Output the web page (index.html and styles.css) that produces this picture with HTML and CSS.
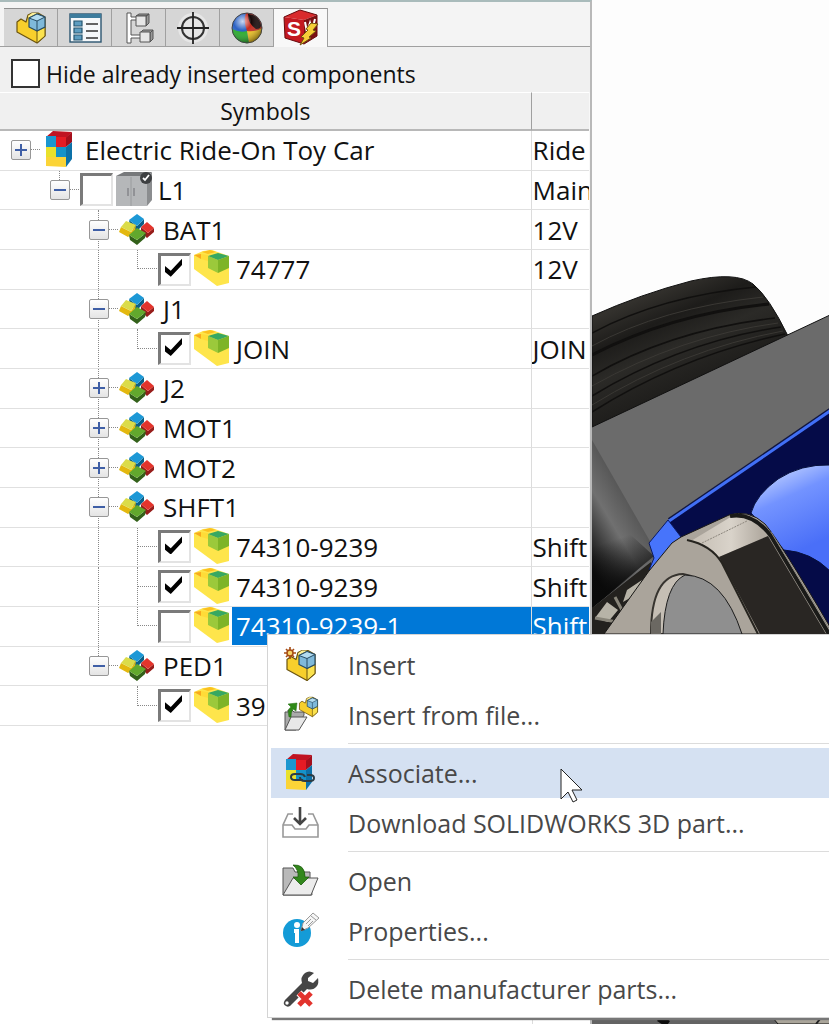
FILE: index.html
```html
<!DOCTYPE html>
<html lang="en">
<head>
<meta charset="UTF-8">
<meta name="viewport" content="width=device-width, initial-scale=1.0">
<title>Electric Ride-On Toy Car</title>
<link rel="stylesheet" href="styles.css">
</head>
<body>

<!-- shared icons -->
<svg class="sprite" width="0" height="0" aria-hidden="true">
    <symbol id="part" viewBox="0 0 32 34">
        <path d="M2 11 6 8 11 11 13 4 17 2 23 2 30 6V25L22 32 2 21Z" fill="#f7cf2c" stroke="#6b5410" stroke-width="1.2" stroke-linejoin="round"/>
        <path d="M22 20 30 16V25L22 32Z" fill="#fbe24e" stroke="#6b5410" stroke-linejoin="round"/>
        <path d="M13 5 17 2 22 2 14 7Z" fill="#fbef9a"/>
        <path d="M14 7 22 3 30 6V16L22 20 14 16Z" fill="#7fb9da" stroke="#274b63" stroke-width="1.2" stroke-linejoin="round"/>
        <path d="M14 7 22 3 30 6 22 10Z" fill="#b3dcf0" stroke="#274b63" stroke-linejoin="round"/>
        <path d="M22 10V20" stroke="#274b63"/>
    </symbol>
    <symbol id="cubes" viewBox="0 0 40 40">
        <path d="M11 10 19 16 26 9V14L19 21 12 16Z" fill="#0b5f86"/>
        <path d="M19 4 26 9 19 16 11 10Z" fill="#1c98d6"/>
        <path d="M3 17 13 22 18 15 17 21 10 27 1 22Z" fill="#e3b80f"/>
        <path d="M8 11 18 15 13 22 3 17Z" fill="#dbdc49"/>
        <path d="M23 17 30 23 36 18V22L29 28 23 22Z" fill="#971d1b"/>
        <path d="M29 12 36 18 30 23 23 17Z" fill="#e3342c"/>
        <path d="M11 25 19 30 28 23 27 28 19 35 12 30Z" fill="#33611a"/>
        <path d="M19 18 28 23 19 30 11 25Z" fill="#62a82d"/>
    </symbol>
    <symbol id="brick" viewBox="0 0 40 40">
        <path d="M3 6 12 2 21 1 38 7V34L26 37 3 20Z" fill="#fee54b"/>
        <path d="M3 6 10 5 10 10Z" fill="#f8a91c"/>
        <path d="M11 3 19 1 25 3 17 5Z" fill="#fbc01f"/>
        <path d="M10 5 17 6V12L10 10Z" fill="#ffdc38"/>
        <path d="M17 7 27 11V24L17 19Z" fill="#9bc93b"/>
        <path d="M27 11 38 7V19L27 24Z" fill="#7eb427"/>
        <path d="M17 7 27 4 38 7 27 11Z" fill="#37a861"/>
    </symbol>
    <symbol id="project" viewBox="0 0 40 40">
        <path d="M6 7 13 1 32 2 26 9Z" fill="#c01322"/>
        <path d="M6 6H16V17H6Z" fill="#1b96cf"/>
        <path d="M16 7H26V17H16Z" fill="#e51b24"/>
        <path d="M6 17H16V27H26V37L6 36Z" fill="#fbd437"/>
        <path d="M6 17H16V27H6Z" fill="#e9e12b"/>
        <path d="M16 17H26V27H16Z" fill="#1593c9"/>
        <path d="M26 8 32 2V12L26 17Z" fill="#a40f1c"/>
        <path d="M26 17 32 12V29L26 37Z" fill="#0d71a8"/>
    </symbol>
</svg>

<div class="app">
    <div class="panel">
        <div class="tabs">
            <button class="tab" aria-label="Feature tree">
                <svg width="32" height="34"><use href="#part"/></svg>
            </button>
            <button class="tab" aria-label="Properties">
                <svg width="34" height="32" viewBox="0 0 34 32">
                    <rect x="2" y="2" width="31" height="28" fill="#f5f8fa" stroke="#2b5570" stroke-width="1.4"/>
                    <rect x="2" y="2" width="31" height="4" fill="#3d7c9d"/>
                    <path d="M6 9h8v5H6zM6 16h8v5H6zM6 23h8v5H6z" fill="#5d9dc0" stroke="#24556f" stroke-width="1.2"/>
                    <path d="M18 12h12M18 19h12M18 26h12" stroke="#333" stroke-width="1.6"/>
                </svg>
            </button>
            <button class="tab" aria-label="Configurations">
                <svg width="32" height="34" viewBox="0 0 32 34">
                    <path d="M4 2H8V6H14V9H8V24H18V27H8V32H4Z" fill="#fff" stroke="#555"/>
                    <path d="M13 5 16 3H26L23 5ZM23 5 26 3V12L23 15ZM17 22 20 19H30L27 22ZM27 22 30 19V28L27 31Z" fill="#999" stroke="#555"/>
                    <path d="M13 5h10v10H13zM17 21h10v10H17z" fill="#e6e6e6" stroke="#555"/>
                </svg>
            </button>
            <button class="tab" aria-label="Dimensions">
                <svg width="34" height="34" viewBox="0 0 34 34">
                    <circle cx="17" cy="17" r="15" fill="#e6e6e6"/>
                    <circle cx="17" cy="17" r="11" fill="none" stroke="#333" stroke-width="2"/>
                    <path d="M17 1V33M1 17H33" stroke="#222" stroke-width="1.8"/>
                </svg>
            </button>
            <button class="tab" aria-label="Appearances">
                <svg width="34" height="34" viewBox="0 0 34 34">
                    <defs>
                        <radialGradient id="ball" cx=".35" cy=".28" r=".75"><stop offset="0" stop-color="#fff" stop-opacity=".75"/><stop offset=".4" stop-color="#fff" stop-opacity="0"/><stop offset="1" stop-color="#000" stop-opacity=".45"/></radialGradient>
                    </defs>
                    <circle cx="17" cy="17" r="15" fill="#2b62c5"/>
                    <path d="M2 18Q10 22 17 20L19 32A15 15 0 0 1 2 18Z" fill="#27ad2b"/>
                    <path d="M17 20Q26 20 32 16A15 15 0 0 1 19 32Z" fill="#f2c51e"/>
                    <path d="M16 2A15 15 0 0 1 32 17Q26 21 17 20 13 10 16 2Z" fill="#c52a1e"/>
                    <path d="M18 3Q28 3 31 14 31 18 26 18 18 13 18 3Z" fill="#170909"/>
                    <circle cx="17" cy="17" r="15" fill="url(#ball)" stroke="#444"/>
                </svg>
            </button>
            <button class="tab tab-active" aria-label="Electrical components">
                <svg width="38" height="38" viewBox="0 0 38 38">
                    <path d="M2 8 18 1 35 6 22 11Z" fill="#d92a2d"/>
                    <path d="M2 8 22 11V35L3 29Z" fill="#c31920"/>
                    <path d="M22 11 35 6V27L22 35Z" fill="#7d1013"/>
                    <path d="M2 8 18 1 35 6V27L22 35 3 29Z" fill="none" stroke="#68090d"/>
                    <text x="5" y="27" class="cube-letter">S</text>
                    <path d="M23 13 25 23 28 14 30 21 33 10" fill="none" stroke="#fff" stroke-width="2"/>
                    <path d="M29 14 36 15 31 21 34 22 27 28 29 29 18 36 22 29 19 28 26 21 24 20Z" fill="#f7cf38" stroke="#6f5110"/>
                </svg>
            </button>
        </div>

        <div class="filter">
            <input type="checkbox" id="hide-inserted">
            <label for="hide-inserted">Hide already inserted components</label>
        </div>

        <table class="tree">
            <thead>
                <tr><th>Symbols</th><th class="desc" aria-label="Description"></th></tr>
            </thead>
            <tbody>
                <tr>
                    <td><div class="node">
                        <span class="guide right"><button class="toggle plus" aria-label="Expand"></button></span>
                        <svg class="icon"><use href="#project"/></svg>
                        <span class="name">Electric Ride-On Toy Car</span>
                    </div></td>
                    <td>Ride</td>
                </tr>
                <tr>
                    <td><div class="node">
                        <span class="guide"></span>
                        <span class="guide up right"><button class="toggle" aria-label="Collapse"></button></span>
                        <input type="checkbox" id="n-l1">
                        <svg class="icon" viewBox="0 0 40 40">
                            <path d="M3 6 11 2H39L34 7Z" fill="#77797b"/>
                            <path d="M3 6H34V36H3Z" fill="#b5b7b9"/>
                            <path d="M34 7 39 2V30L34 36Z" fill="#8b8d8f"/>
                            <path d="M18 7V36" stroke="#9a9c9e"/>
                            <path d="M15 18V26M21 18V26" stroke="#85878a" stroke-width="1.5"/>
                            <circle cx="33" cy="8" r="6" fill="#3d3f41"/>
                            <path d="M30 8 32 10 36 5" fill="none" stroke="#fff" stroke-width="1.8"/>
                        </svg>
                        <label class="name" for="n-l1">L1</label>
                    </div></td>
                    <td>Main</td>
                </tr>
                <tr>
                    <td><div class="node">
                        <span class="guide"></span><span class="guide"></span>
                        <span class="guide up down right"><button class="toggle" aria-label="Collapse"></button></span>
                        <svg class="icon"><use href="#cubes"/></svg>
                        <span class="name">BAT1</span>
                    </div></td>
                    <td>12V</td>
                </tr>
                <tr>
                    <td><div class="node">
                        <span class="guide"></span><span class="guide"></span><span class="guide up down"></span>
                        <span class="guide up right"></span>
                        <input type="checkbox" id="n-74777" checked>
                        <svg class="icon"><use href="#brick"/></svg>
                        <label class="name" for="n-74777">74777</label>
                    </div></td>
                    <td>12V</td>
                </tr>
                <tr>
                    <td><div class="node">
                        <span class="guide"></span><span class="guide"></span>
                        <span class="guide up down right"><button class="toggle" aria-label="Collapse"></button></span>
                        <svg class="icon"><use href="#cubes"/></svg>
                        <span class="name">J1</span>
                    </div></td>
                    <td></td>
                </tr>
                <tr>
                    <td><div class="node">
                        <span class="guide"></span><span class="guide"></span><span class="guide up down"></span>
                        <span class="guide up right"></span>
                        <input type="checkbox" id="n-join" checked>
                        <svg class="icon"><use href="#brick"/></svg>
                        <label class="name" for="n-join">JOIN</label>
                    </div></td>
                    <td>JOIN</td>
                </tr>
                <tr>
                    <td><div class="node">
                        <span class="guide"></span><span class="guide"></span>
                        <span class="guide up down right"><button class="toggle plus" aria-label="Expand"></button></span>
                        <svg class="icon"><use href="#cubes"/></svg>
                        <span class="name">J2</span>
                    </div></td>
                    <td></td>
                </tr>
                <tr>
                    <td><div class="node">
                        <span class="guide"></span><span class="guide"></span>
                        <span class="guide up down right"><button class="toggle plus" aria-label="Expand"></button></span>
                        <svg class="icon"><use href="#cubes"/></svg>
                        <span class="name">MOT1</span>
                    </div></td>
                    <td></td>
                </tr>
                <tr>
                    <td><div class="node">
                        <span class="guide"></span><span class="guide"></span>
                        <span class="guide up down right"><button class="toggle plus" aria-label="Expand"></button></span>
                        <svg class="icon"><use href="#cubes"/></svg>
                        <span class="name">MOT2</span>
                    </div></td>
                    <td></td>
                </tr>
                <tr>
                    <td><div class="node">
                        <span class="guide"></span><span class="guide"></span>
                        <span class="guide up down right"><button class="toggle" aria-label="Collapse"></button></span>
                        <svg class="icon"><use href="#cubes"/></svg>
                        <span class="name">SHFT1</span>
                    </div></td>
                    <td></td>
                </tr>
                <tr>
                    <td><div class="node">
                        <span class="guide"></span><span class="guide"></span><span class="guide up down"></span>
                        <span class="guide up down right"></span>
                        <input type="checkbox" id="n-shft-a" checked>
                        <svg class="icon"><use href="#brick"/></svg>
                        <label class="name" for="n-shft-a">74310-9239</label>
                    </div></td>
                    <td>Shift</td>
                </tr>
                <tr>
                    <td><div class="node">
                        <span class="guide"></span><span class="guide"></span><span class="guide up down"></span>
                        <span class="guide up down right"></span>
                        <input type="checkbox" id="n-shft-b" checked>
                        <svg class="icon"><use href="#brick"/></svg>
                        <label class="name" for="n-shft-b">74310-9239</label>
                    </div></td>
                    <td>Shift</td>
                </tr>
                <tr class="selected">
                    <td><div class="node">
                        <span class="guide"></span><span class="guide"></span><span class="guide up down"></span>
                        <span class="guide up right"></span>
                        <input type="checkbox" id="n-shft-c">
                        <svg class="icon"><use href="#brick"/></svg>
                        <label class="name" for="n-shft-c">74310-9239-1</label>
                    </div></td>
                    <td>Shift</td>
                </tr>
                <tr>
                    <td><div class="node">
                        <span class="guide"></span><span class="guide"></span>
                        <span class="guide up right"><button class="toggle" aria-label="Collapse"></button></span>
                        <svg class="icon"><use href="#cubes"/></svg>
                        <span class="name">PED1</span>
                    </div></td>
                    <td></td>
                </tr>
                <tr>
                    <td><div class="node">
                        <span class="guide"></span><span class="guide"></span><span class="guide"></span>
                        <span class="guide up right"></span>
                        <input type="checkbox" id="n-39" checked>
                        <svg class="icon"><use href="#brick"/></svg>
                        <label class="name" for="n-39">39</label>
                    </div></td>
                    <td></td>
                </tr>
            </tbody>
        </table>
        <div class="tree-rest"></div>
    </div>

    <div class="viewport">
        <svg viewBox="591 0 238 1024" preserveAspectRatio="xMinYMin slice" aria-hidden="true">
            <defs>
                <linearGradient id="tyre" x1="680" y1="280" x2="720" y2="370" gradientUnits="userSpaceOnUse">
                    <stop offset="0" stop-color="#33312d"/><stop offset=".3" stop-color="#1d1c1a"/><stop offset=".6" stop-color="#2b2a27"/><stop offset="1" stop-color="#1f1e1c"/>
                </linearGradient>
                <linearGradient id="tube" x1="591" y1="570" x2="650" y2="535" gradientUnits="userSpaceOnUse">
                    <stop offset="0" stop-color="#0c0c0c"/><stop offset=".25" stop-color="#333"/><stop offset=".6" stop-color="#707070"/><stop offset="1" stop-color="#555"/>
                </linearGradient>
                <linearGradient id="tubeend" x1="612" y1="540" x2="628" y2="588" gradientUnits="userSpaceOnUse">
                    <stop offset="0" stop-color="#0a0a0a" stop-opacity="0"/><stop offset="1" stop-color="#0a0a0a"/>
                </linearGradient>
                <linearGradient id="sphere" x1="765" y1="475" x2="800" y2="550" gradientUnits="userSpaceOnUse">
                    <stop offset="0" stop-color="#b9cbff"/><stop offset=".35" stop-color="#7393ff"/><stop offset="1" stop-color="#4a6ff8"/>
                </linearGradient>
                <linearGradient id="rim" x1="700" y1="535" x2="760" y2="535" gradientUnits="userSpaceOnUse">
                    <stop offset="0" stop-color="#c9c2b8"/><stop offset=".5" stop-color="#d9d3ca"/><stop offset="1" stop-color="#b3aca2"/>
                </linearGradient>
            </defs>
            <!-- tyre -->
            <path d="M591 316Q640 294 690 281 735 271 752 284 768 297 787 336L591 428Z" fill="url(#tyre)" stroke="#111"/>
            <g fill="none" stroke="#11100f" stroke-width="1.5">
                <path d="M591 333Q660 296 755 287"/>
                <path d="M591 355Q670 314 768 304" stroke-width="3"/>
                <path d="M591 376Q670 330 774 318"/>
                <path d="M591 396Q680 342 780 327"/>
                <path d="M591 412Q680 356 784 334"/>
            </g>
            <g fill="none" stroke="#3a3834">
                <path d="M591 346Q660 308 762 297"/>
                <path d="M591 386Q680 336 777 323"/>
                <path d="M591 405Q680 350 782 331"/>
            </g>
            <!-- body -->
            <path d="M591 427 829 315V410L668 521 630 620H591Z" fill="#6b6b6b"/>
            <path d="M591 427 829 315" stroke="#111"/>
            <path d="M591 440 650 543 653 558 591 608Z" fill="url(#tube)"/>
            <path d="M591 500 653 556 591 608Z" fill="url(#tubeend)"/>
            <path d="M829 410 668 520 675 545 700 640H829Z" fill="#050b48"/>
            <path d="M829 410 668 520" stroke="#101640" stroke-width="4"/>
            <path d="M829 411 668 521" stroke="#416ff5" stroke-width="3"/>
            <path d="M829 465Q800 464 777 479 755 495 750 513L783 550Q810 552 829 571Z" fill="url(#sphere)" stroke="#06103c"/>
            <!-- struts under the tube -->
            <path d="M591 608 650 562 650 634H591Z" fill="#23211e"/>
            <path d="M594 618 606 602 617 610 607 622ZM626 590 641 580 636 594 622 602Z" fill="#b7b3a7"/>
            <path d="M614 597 622 612M594 618 616 622" stroke="#888479" stroke-width="3"/>
            <path d="M667 520 648 543 653 558 648 570 656 566 675 543 680 537Z" fill="#4774fb" stroke="#0a1a63"/>
            <!-- crank housing -->
            <path d="M603 634 648 571 671 543 680 537 728 515Q748 509 764 524 778 540 829 627V634Z" fill="#aaa49b" stroke="#181715"/>
            <path d="M690 541 733 515Q752 514 767 536L718 557Q708 544 690 541Z" fill="url(#rim)"/>
            <path d="M701 543 746 521" stroke="#8d877e" stroke-dasharray="2 1"/>
            <path d="M718 557 767 536 825 634H759Z" fill="#292623"/>
            <path d="M729 516Q752 512 770 536L828 634" fill="none" stroke="#1a1a18" stroke-width="4"/>
            <path d="M770 532 829 630" stroke="#85817a"/>
            <path d="M686 540Q710 545 721 563L757 634" fill="none" stroke="#26241f" stroke-width="2"/>
            <path d="M650 634Q650 575 682 574L690 576 664 634Z" fill="#c5beb4" stroke="#37342f" stroke-width="2"/>
            <path d="M650 622 660 612V634H650Z" fill="#6b6862"/>
            <path d="M662 634Q664 584 684 575 722 576 741 634Z" fill="#8f8f8f" stroke="#1c1c1c"/>
            <!-- lower edge of the model -->
            <path d="M591 1018H829V1024H591Z" fill="#636363"/>
            <path d="M658 1018 667 1024" stroke="#0d0d0d" stroke-width="7"/>
            <path d="M772 1018H829V1024H777Z" fill="#aaa59a" stroke="#111"/>
            <path d="M815 1024 819 1019H829" fill="none" stroke="#222" stroke-width="2"/>
        </svg>
    </div>

    <div class="menu" role="menu">
        <button class="menu-item" role="menuitem">
            <svg class="menu-icon" viewBox="0 0 40 40">
                <use href="#part" x="5" y="3" width="32" height="35"/>
                <circle cx="10" cy="8" r="3" fill="#f8d568" stroke="#a64b13" stroke-width="1.5"/>
                <path d="M10 2V5M10 11V14M4 8H7M13 8H16M6 4 8 6M12 10 14 12M14 4 12 6M8 10 6 12" stroke="#a64b13" stroke-width="1.6"/>
            </svg>
            <span>Insert</span>
        </button>
        <button class="menu-item" role="menuitem">
            <svg class="menu-icon" viewBox="0 0 40 40">
                <path d="M5 17H8V15H12L14 17H24V20L16 35H5Z" fill="#aaa" stroke="#555"/>
                <path d="M11 22H27L19 35H5Z" fill="#e8e8e8" stroke="#555"/>
                <path d="M9 22Q7 14 11 12L8 9 17 8 16 16 13 14Q11 17 11 22Z" fill="#2f8a17" stroke="#216b0e" stroke-width=".5"/>
                <use href="#part" x="18" y="1" width="21" height="22"/>
            </svg>
            <span>Insert from file...</span>
        </button>
        <div class="separator"></div>
        <button class="menu-item hovered" role="menuitem">
            <svg class="menu-icon" viewBox="0 0 40 40">
                <use href="#project" width="40" height="40"/>
                <path d="M23 27H15Q11 27 11 24 11 21 15 21H20Q24 21 25 24M20 24Q20 28 25 28H30Q34 28 34 25 34 22 30 22H27" fill="none" stroke="#2c3c45" stroke-width="2"/>
            </svg>
            <span>Associate...</span>
            <svg class="cursor" width="24" height="36" viewBox="0 0 24 36">
                <path d="M1 1V31L8 24 13 34 17 32 12 22H22Z" fill="#fff" stroke="#222"/>
            </svg>
        </button>
        <button class="menu-item" role="menuitem">
            <svg class="menu-icon" viewBox="0 0 40 40">
                <path d="M13 11H8L3 22V34H38V22L33 11H28M3 22H12L15 26H26L29 22H38" fill="none" stroke="#999" stroke-width="1.6"/>
                <path d="M20 4V20M14 15 20 21 26 15" fill="none" stroke="#454545" stroke-width="2.6"/>
            </svg>
            <span>Download SOLIDWORKS 3D part...</span>
        </button>
        <div class="separator"></div>
        <button class="menu-item" role="menuitem">
            <svg class="menu-icon" viewBox="0 0 40 40">
                <path d="M3 7H13L15 11H30V17L32 34H3Z" fill="#b9b9b9" stroke="#555"/>
                <path d="M13 17H38L31 34H3Z" fill="#ececec" stroke="#555"/>
                <path d="M13 4Q25 3 25 16H29L21 24 13 16H18Q19 9 13 4Z" fill="#32871c" stroke="#1c5c0d" stroke-width=".8"/>
            </svg>
            <span>Open</span>
        </button>
        <button class="menu-item" role="menuitem">
            <svg class="menu-icon" viewBox="0 0 40 40">
                <circle cx="17" cy="22" r="14" fill="#149bd7"/>
                <circle cx="17" cy="14" r="3" fill="#fff"/>
                <path d="M14 20H17V32" fill="none" stroke="#fff" stroke-width="4"/>
                <path d="M21 20 23 12 33 2 39 7 28 17Z" fill="#f6f6f6" stroke="#999"/>
                <path d="M21 20 22 16 25 19Z" fill="#333"/>
                <path d="M26 13 31 8M28 15 33 10M31 5 36 9" stroke="#999"/>
            </svg>
            <span>Properties...</span>
        </button>
        <div class="separator"></div>
        <button class="menu-item" role="menuitem">
            <svg class="menu-icon" viewBox="0 0 40 40">
                <path d="M34 4Q29 1 25 4 20 8 22 14L5 31Q2 35 6 37 9 39 12 35L27 20Q33 22 37 17 39 14 38 9L33 14 28 12 28 9Z" fill="#454545"/>
                <circle cx="7" cy="34" r="1.7" fill="#fff"/>
                <path d="M19 24 31 36M31 24 19 36" stroke="#fff" stroke-width="7"/>
                <path d="M19 24 31 36M31 24 19 36" stroke="#e2332d" stroke-width="5"/>
            </svg>
            <span>Delete manufacturer parts...</span>
        </button>
    </div>
</div>

</body>
</html>
```

FILE: styles.css
```css
* {
    box-sizing: border-box;
}
body {
    margin: 0;
    font-family: "Open Sans", "Noto Sans", sans-serif;
    font-size: 25px;
    color: #111;
    background: #fff;
}
button {
    font: inherit;
    color: inherit;
    border: 0;
    padding: 0;
    background: none;
}
svg {
    display: block;
    flex: none;
}
.sprite {
    position: absolute;
}
.app {
    position: relative;
    display: flex;
    height: 100vh;
    min-height: 1024px;
    overflow: hidden;
}

/* left panel */
.panel {
    flex: 591 1 0;
    min-width: 0;
    display: flex;
    flex-direction: column;
    border-top: 2px solid #a9bbbb;
    border-right: 2px solid #b9b9b9;
    background: #fff;
    overflow: hidden;
}
.viewport {
    flex: 238 1 0;
    min-width: 0;
    overflow: hidden;
    background: #fdfdfd;
}
.viewport svg {
    width: 100%;
    height: 100%;
}
.tabs {
    display: flex;
    flex: none;
    height: 45px;
    padding: 6px 0 0 4px;
    background: #f4f4f4;
    border-bottom: 1px solid #a0a0a0;
}
.tab {
    width: 54px;
    height: 38px;
    display: flex;
    align-items: center;
    justify-content: center;
    background: #d6d6d6;
    border-top: 1px solid #909090;
    border-right: 1px solid #a0a0a0;
}
.tab-active {
    height: 39px;
    background: #f8f8f8;
}
.cube-letter {
    font: bold 21px "Liberation Sans", sans-serif;
    fill: #fff;
}
.filter {
    display: flex;
    align-items: center;
    flex: none;
    gap: 6px;
    height: 45px;
    padding: 8px 0 0 11px;
    font-size: 23px;
    background: #f0f0f0;
}
.filter input {
    appearance: none;
    width: 29px;
    height: 29px;
    margin: 0;
    border: 2px solid #333;
    background: #fff;
}

/* symbols tree */
.tree {
    width: 100%;
    height: 634px;
    flex: none;
    table-layout: fixed;
    border-collapse: separate;
    border-spacing: 0;
    border-right: 1px solid #f8f8f8;
    font-size: 26px;
}
.tree th {
    height: 39px;
    padding: 0;
    font-size: 23px;
    font-weight: normal;
    line-height: 32px;
    background: #f0f0f0;
    border-top: 1px solid #fff;
    border-bottom: 2px solid #b8b8b8;
    border-right: 1px solid #a0a0a0;
}
.tree th.desc {
    width: 57px;
    border-right: 0;
}
.tree td {
    padding: 0;
    line-height: 38px;
    white-space: nowrap;
    overflow: hidden;
    border-bottom: 1px solid #e0e0e0;
}
.tree td:first-child {
    border-right: 1px solid #dcdcdc;
}
.tree td:last-child {
    padding-left: 1px;
}
.node {
    display: flex;
    align-items: center;
    height: 38px;
    padding-left: 1px;
}
.guide {
    flex: none;
    position: relative;
    width: 39px;
    height: 40px;
    display: flex;
    align-items: center;
    padding-left: 10px;
}
.guide.up::before,
.guide.down::before {
    content: "";
    position: absolute;
    left: 19px;
    top: 0;
    height: 20px;
    border-left: 1px dotted #888;
}
.guide.down::before {
    height: 40px;
}
.guide.right::after {
    content: "";
    position: absolute;
    left: 19px;
    right: 0;
    top: 19px;
    border-top: 1px dotted #888;
}
.toggle {
    position: relative;
    z-index: 1;
    width: 20px;
    height: 20px;
    border: 1px solid #979797;
    border-radius: 2px;
    background: linear-gradient(#3f5fa6, #3f5fa6) center / 12px 2px no-repeat, linear-gradient(#fff, #e4e4e4);
}
.toggle.plus {
    background: linear-gradient(#3f5fa6, #3f5fa6) center / 12px 2px no-repeat, linear-gradient(#3f5fa6, #3f5fa6) center / 2px 12px no-repeat, linear-gradient(#fff, #e4e4e4);
}
.node input {
    appearance: none;
    flex: none;
    width: 33px;
    height: 33px;
    margin: 0 0 0 1px;
    border: 2px solid #e3e3e3;
    border-top: 3px solid #7a7a7a;
    border-left: 3px solid #7a7a7a;
    background: #fff;
}
.node input:checked::before {
    content: "";
    display: block;
    width: 17px;
    height: 18px;
    margin: 3px 0 0 4px;
    background: #000;
    clip-path: polygon(0 40%, 34% 66%, 100% 0, 100% 34%, 34% 100%, 0 74%);
}
.icon {
    width: 40px;
    height: 40px;
}
.name {
    flex: 1;
    height: 38px;
    margin-left: 1px;
    padding-left: 4px;
    line-height: 38px;
}
.selected .name,
.selected td:last-child {
    color: #fff;
    background: #0078d7;
}
.tree-rest {
    flex: 1;
    margin-right: 57px;
    border-right: 1px solid #dcdcdc;
}

/* context menu */
.menu {
    position: absolute;
    left: 267px;
    right: 0;
    top: 634px;
    padding: 5px 0 3px 3px;
    background: #fff;
    border: 1px solid #d4d4d4;
    border-right: 0;
    box-shadow: 5px 2px 1px #777;
    color: #484848;
}
.menu-item {
    position: relative;
    display: flex;
    align-items: center;
    gap: 28px;
    width: 100%;
    height: 50px;
    padding-left: 9px;
    white-space: nowrap;
    text-align: left;
}
.menu-icon {
    width: 40px;
    height: 40px;
}
.hovered {
    background: #d5e1f2;
}
.separator {
    height: 8px;
    margin-left: 77px;
    background: linear-gradient(#dcdcdc, #dcdcdc) 0 3px / 100% 1px no-repeat;
}
.cursor {
    position: absolute;
    left: 289px;
    top: 20px;
}
```
